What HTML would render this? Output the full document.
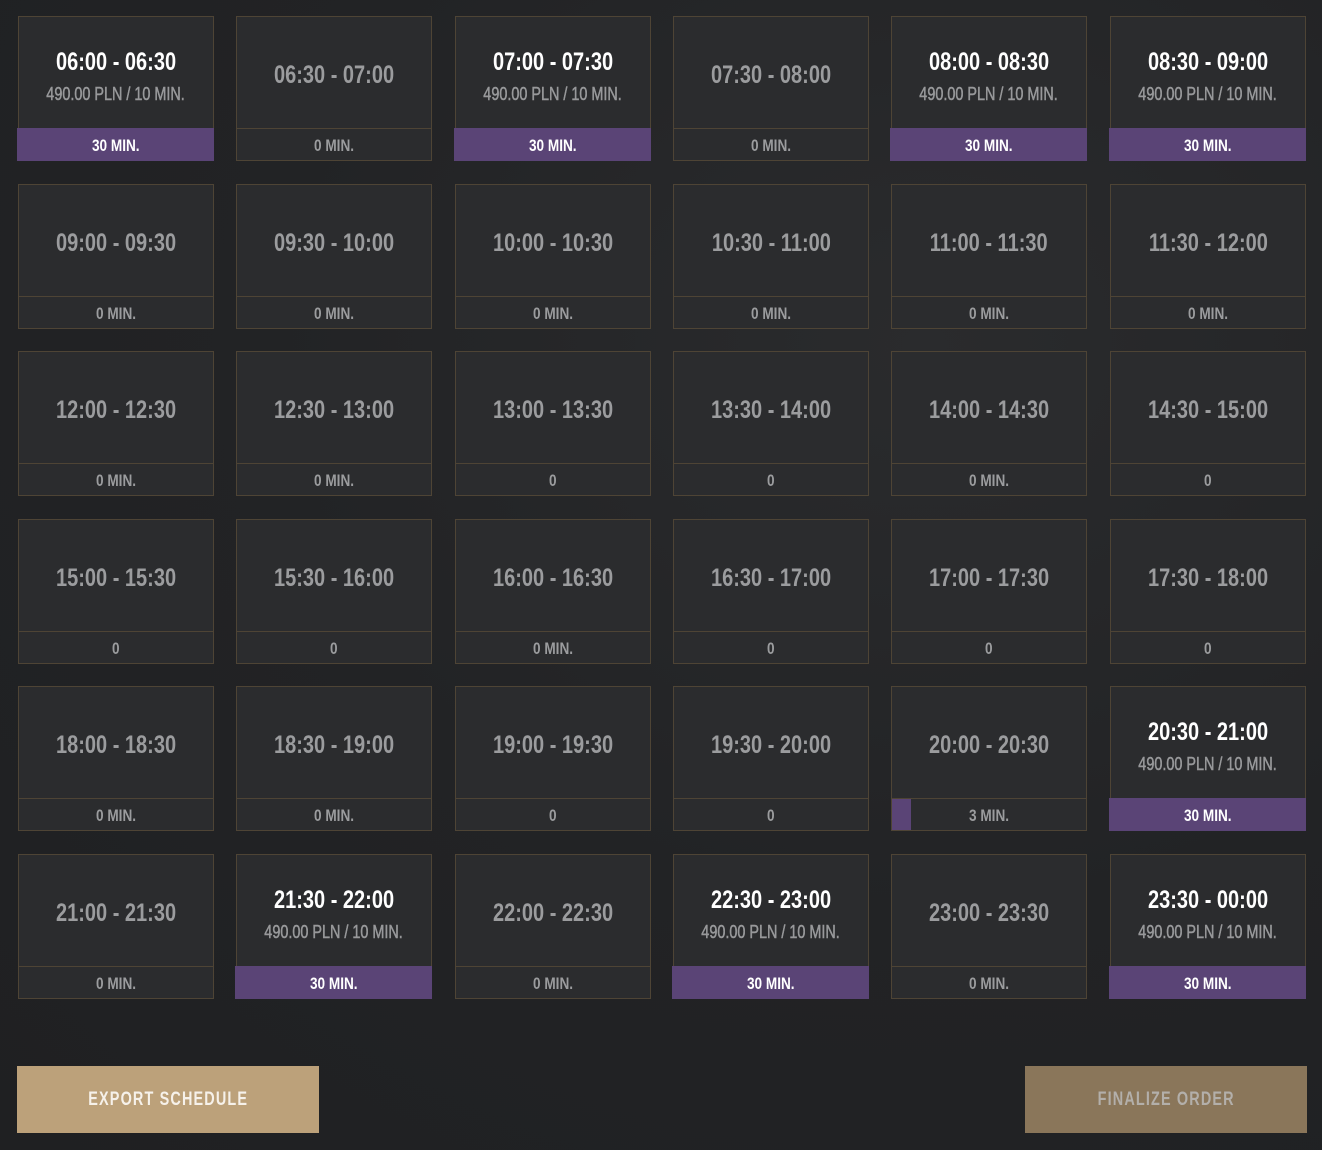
<!DOCTYPE html>
<html><head><meta charset="utf-8"><style>
*{margin:0;padding:0;box-sizing:border-box}
body{width:1322px;height:1150px;background:#212224;position:relative;overflow:hidden;font-family:"Liberation Sans",sans-serif;font-weight:bold}
.bg{position:absolute;inset:0;background:radial-gradient(ellipse at 70% 30%,#2a2b2d 0%,#222325 50%,#1f2022 100%)}
.c{position:absolute;width:196px;height:145px}
.top{position:absolute;left:0;top:0;width:196px;height:113px;background:#2b2c2e;border:1px solid #4e4435;border-bottom:none;text-align:center}
.n{display:inline-block;transform:scaleX(0.8);white-space:nowrap}
.t{font-size:25px;color:#9b9c9e;position:absolute;left:-40px;right:-40px;top:45px;line-height:26px}
.s .t{color:#fff;top:32px}
.p{font-size:18px;color:#98999b;position:absolute;left:-40px;right:-40px;top:67px;line-height:20px;font-weight:normal;-webkit-text-stroke:0.5px #98999b}
.bar{position:absolute;left:0;top:112px;width:196px;height:33px;background:#2b2c2e;border:1px solid #4e4435;text-align:center;font-size:17px;line-height:33px;color:#9b9c9e;overflow:hidden}
.s .bar{background:#5a4476;border-color:#5a4476;color:#fff;left:-1px;width:197px}
.fill{position:absolute;left:0;top:0;bottom:0;width:19px;background:#5a4476}
.bar span{position:relative}
.btn{position:absolute;top:1066px;height:67px;text-align:center;line-height:67px;font-size:19px;letter-spacing:1.5px}
.btn .n{transform:scaleX(0.76)}
</style></head><body><div class="bg"></div>
<div id="g"></div>
<div class="btn" style="left:17px;width:302px;background:#bca17a;color:#f6f1ea"><span class="n">EXPORT SCHEDULE</span></div>
<div class="btn" style="left:1025px;width:282px;background:#8a765a;color:#b3afaa"><span class="n">FINALIZE ORDER</span></div>
<script>
var times=["06:00","06:30","07:00","07:30","08:00","08:30","09:00","09:30","10:00","10:30","11:00","11:30","12:00","12:30","13:00","13:30","14:00","14:30","15:00","15:30","16:00","16:30","17:00","17:30","18:00","18:30","19:00","19:30","20:00","20:30","21:00","21:30","22:00","22:30","23:00","23:30","00:00"];
var bars=["30 MIN.","0 MIN.","30 MIN.","0 MIN.","30 MIN.","30 MIN.",
"0 MIN.","0 MIN.","0 MIN.","0 MIN.","0 MIN.","0 MIN.",
"0 MIN.","0 MIN.","0","0","0 MIN.","0",
"0","0","0 MIN.","0","0","0",
"0 MIN.","0 MIN.","0","0","3 MIN.","30 MIN.",
"0 MIN.","30 MIN.","0 MIN.","30 MIN.","0 MIN.","30 MIN."];
var xs=[18,236,455,673,891,1110],ys=[16,184,351,519,686,854],h="";
for(var i=0;i<36;i++){var s=bars[i]=="30 MIN.";var x=xs[i%6],y=ys[Math.floor(i/6)];
h+='<div class="c'+(s?' s':'')+'" style="left:'+x+'px;top:'+y+'px"><div class="top"><div class="t"><span class="n">'+times[i]+' - '+times[i+1]+'</span></div>'+(s?'<div class="p"><span class="n">490.00 PLN / 10 MIN.</span></div>':'')+'</div><div class="bar">'+(bars[i]=="3 MIN."?'<div class="fill"></div>':'')+'<span class="n">'+bars[i]+'</span></div></div>';}
document.getElementById('g').innerHTML=h;
</script>
</body></html>
